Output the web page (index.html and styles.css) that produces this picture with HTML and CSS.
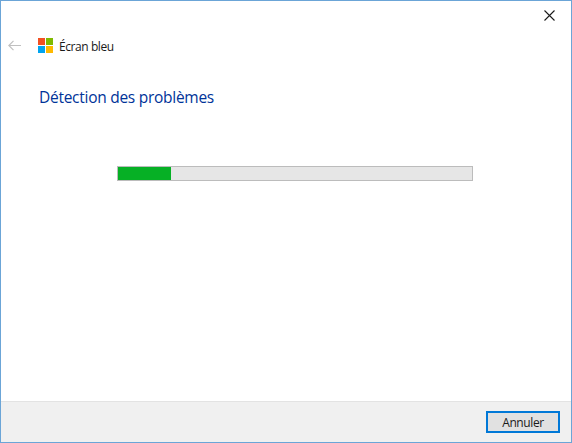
FILE: index.html
```html
<!DOCTYPE html>
<html lang="fr">
<head>
    <meta charset="UTF-8">
    <title>Écran bleu</title>
    <link rel="stylesheet" href="styles.css">
</head>
<body>
    <div class="window">
        <div class="close-row">
            <svg class="close-icon" width="11" height="11" viewBox="0 0 11 11">
                <path d="M0.5 0.5L10.5 10.5M10.5 0.5L0.5 10.5" stroke="#1a1a1a" stroke-width="1.1" fill="none"/>
            </svg>
        </div>
        <div class="title-row">
            <svg class="back-icon" width="13" height="11" viewBox="0 0 13 11">
                <path d="M0.8 5.5H13M5.5 0.8L0.8 5.5L5.5 10.2" stroke="#c0c0c0" stroke-width="1.2" fill="none"/>
            </svg>
            <svg class="logo" width="15" height="15" viewBox="0 0 15 15">
                <rect x="0" y="0" width="7" height="7" fill="#f25022"/>
                <rect x="8" y="0" width="7" height="7" fill="#7fba00"/>
                <rect x="0" y="8" width="7" height="7" fill="#00a4ef"/>
                <rect x="8" y="8" width="7" height="7" fill="#ffb900"/>
            </svg>
            <span class="app-name">Écran bleu</span>
        </div>
        <div class="content">
            <h1 class="heading">Détection des problèmes</h1>
            <div class="progress">
                <div class="progress-bar" style="width: 15%"></div>
            </div>
        </div>
        <div class="footer">
            <button class="cancel-btn">Annuler</button>
        </div>
    </div>
</body>
</html>
```

FILE: styles.css
```css
html, body {
    margin: 0;
    padding: 0;
    height: 100%;
}
body {
    font-family: "Open Sans", "Noto Sans", sans-serif;
    background: white;
}
.window {
    box-sizing: border-box;
    height: 443px;
    border: 1px solid #6ba5d7;
    display: flex;
    flex-direction: column;
}
.close-row {
    display: flex;
    justify-content: flex-end;
    padding: 9px 16px 0 0;
    height: 20px;
}
.title-row {
    display: flex;
    align-items: center;
    height: 15px;
    margin-top: 8px;
    padding-left: 7px;
}
.logo {
    margin-left: 17px;
}
.app-name {
    padding-top: 2px;
    margin-left: 6px;
    font-size: 12px;
    letter-spacing: -0.42px;
    color: #1a1a1a;
}
.content {
    flex: 1;
    padding-left: 38px;
}
.heading {
    margin: 32px 0 0 0;
    font-size: 15.5px;
    font-weight: 400;
    line-height: 24px;
    letter-spacing: -0.27px;
    color: #003399;
}
.progress {
    box-sizing: border-box;
    width: 356px;
    height: 15px;
    margin: 57px 0 0 78px;
    background: #e6e6e6;
    border: 1px solid #bcbcbc;
}
.progress-bar {
    height: 100%;
    background: #06b025;
}
.footer {
    box-sizing: border-box;
    height: 41px;
    background: #f0f0f0;
    border-top: 1px solid #e3e3e3;
    display: flex;
    justify-content: flex-end;
    align-items: flex-start;
    padding: 9px 11px 0 0;
}
.cancel-btn {
    box-sizing: border-box;
    width: 74px;
    height: 22px;
    padding: 0;
    background: #e1e1e1;
    border: 2px solid #0078d7;
    font-family: "Open Sans", "Noto Sans", sans-serif;
    font-size: 12px;
    letter-spacing: -0.4px;
    color: #1a1a1a;
}
```
